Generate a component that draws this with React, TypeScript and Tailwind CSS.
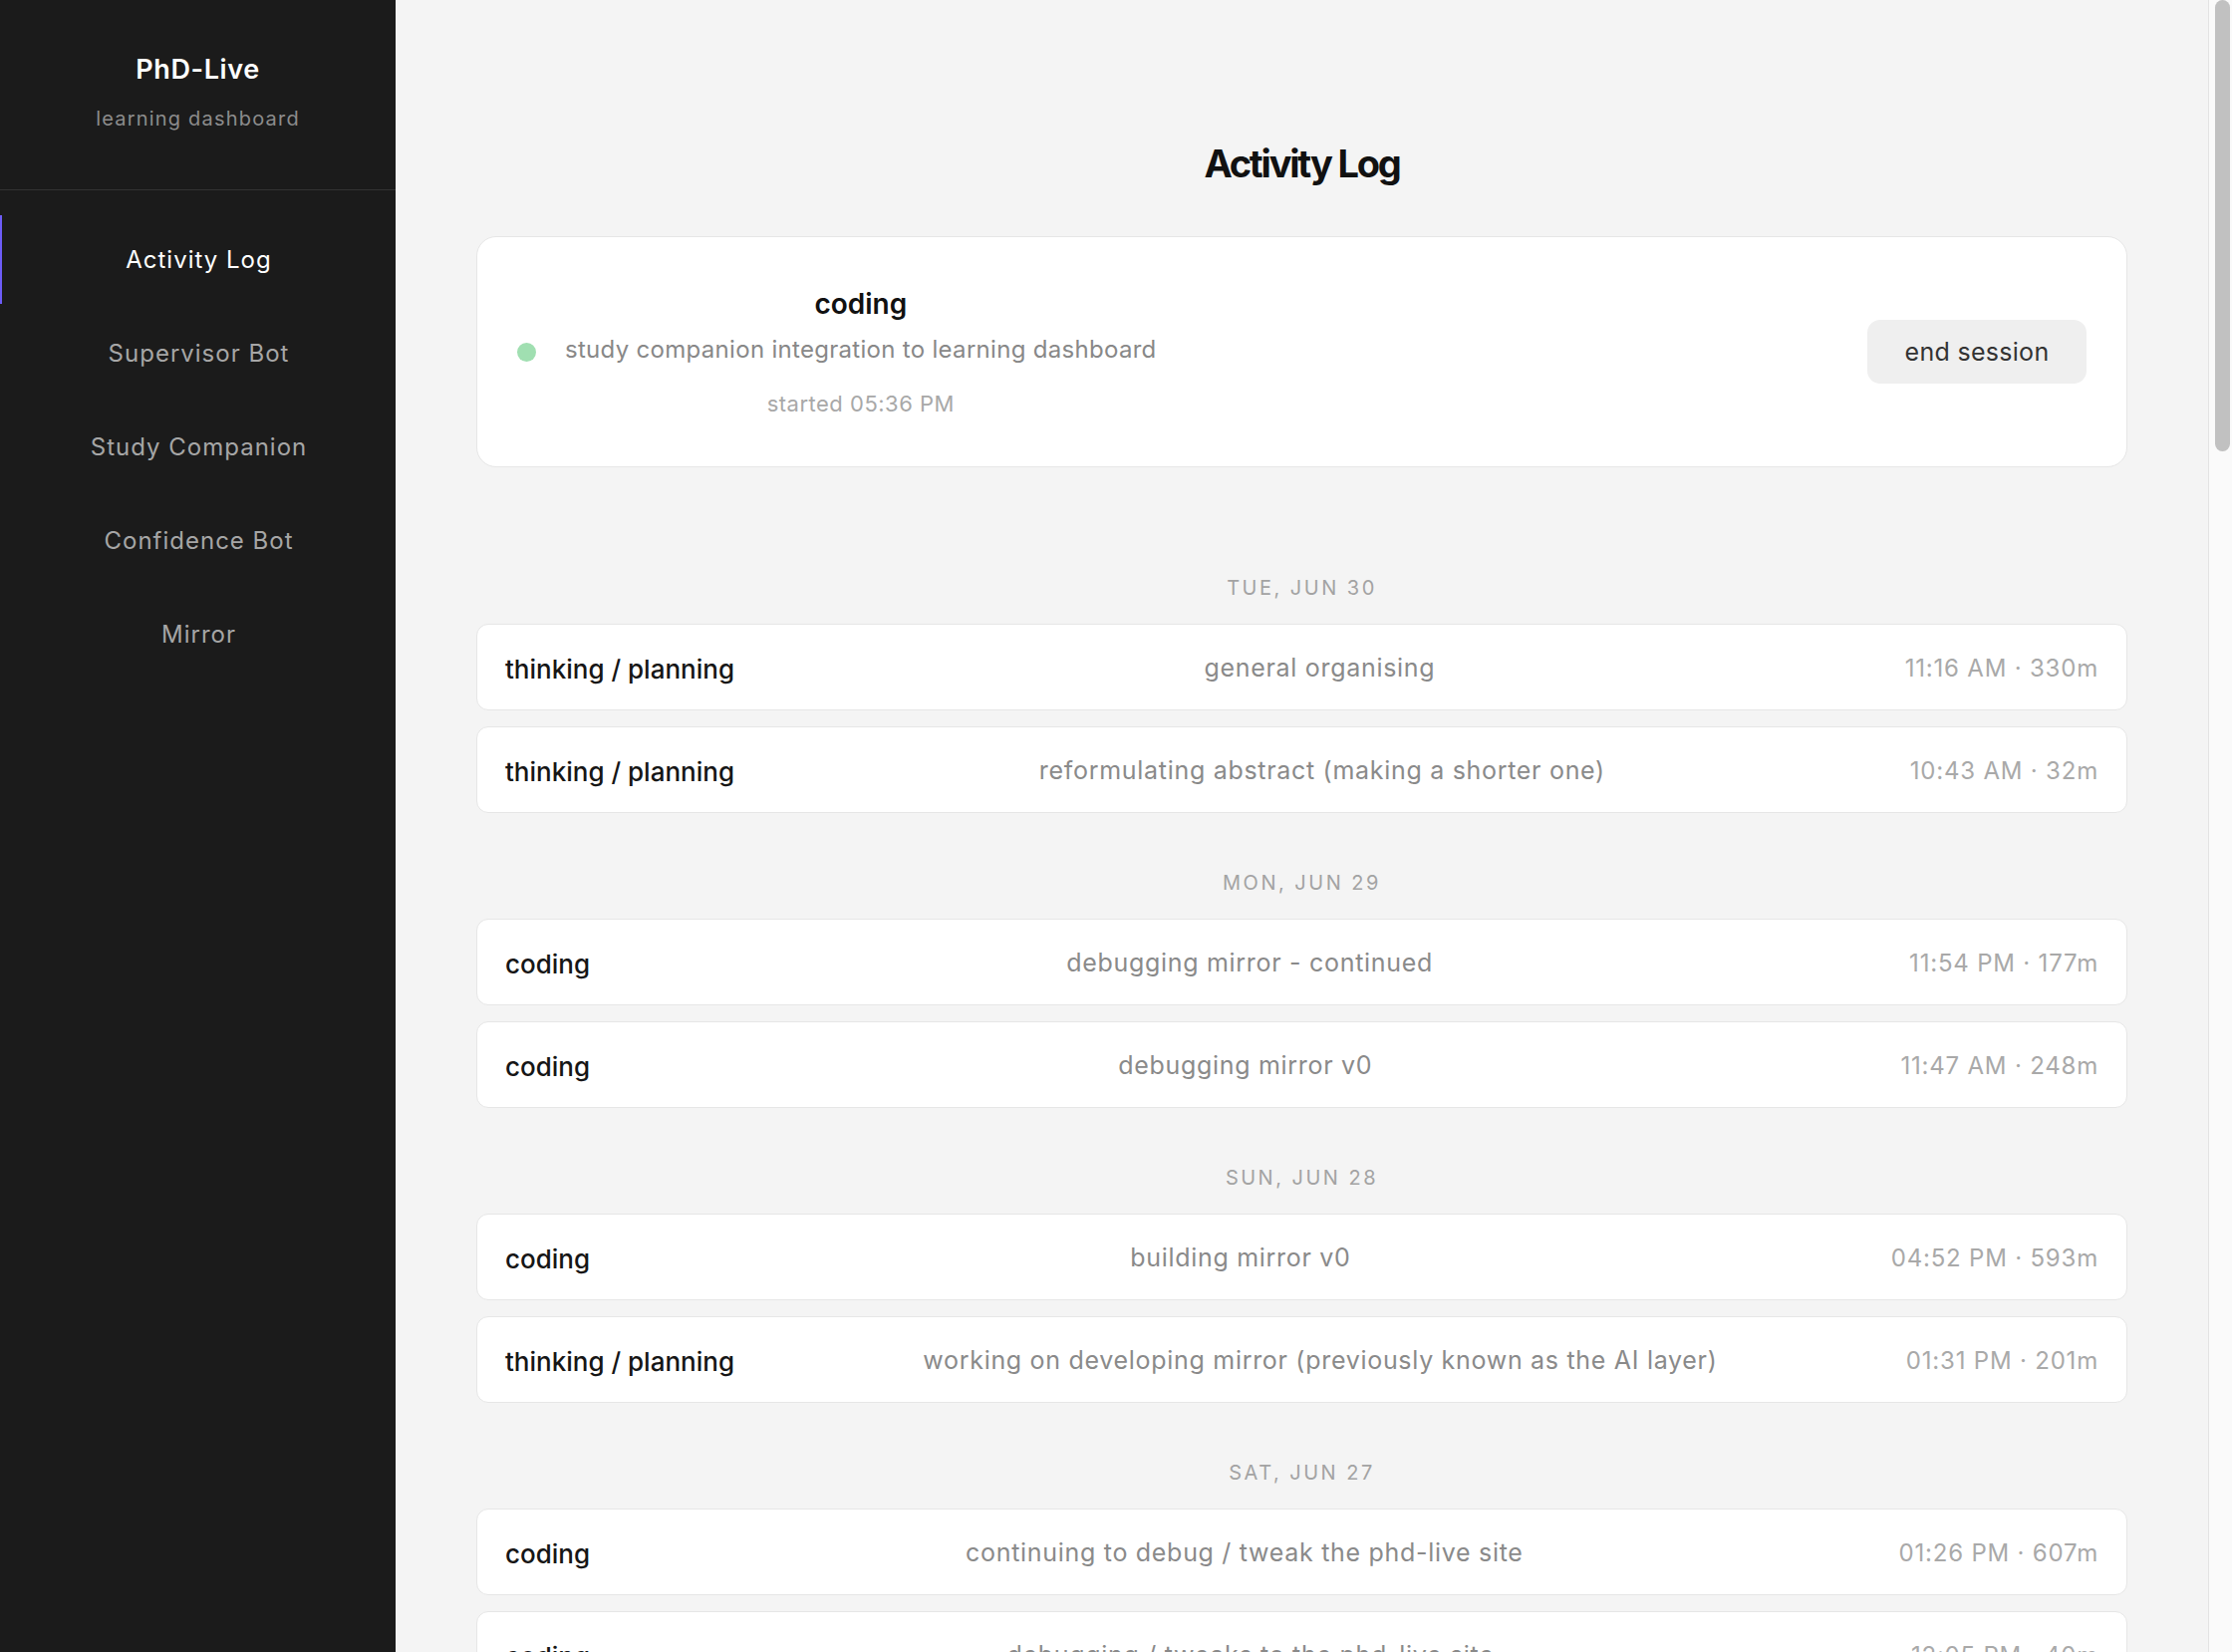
import React from "react";

type Entry = { kind: string; note: string; time: string };
type Day = { date: string; entries: Entry[] };

const NAV = ["Activity Log", "Supervisor Bot", "Study Companion", "Confidence Bot", "Mirror"];

const e = (kind: string, note: string, time: string): Entry => ({ kind, note, time });

const DAYS: Day[] = [
  { date: "Tue, Jun 30", entries: [
    e("thinking / planning", "general organising", "11:16 AM · 330m"),
    e("thinking / planning", "reformulating abstract (making a shorter one)", "10:43 AM · 32m"),
  ] },
  { date: "Mon, Jun 29", entries: [
    e("coding", "debugging mirror - continued", "11:54 PM · 177m"),
    e("coding", "debugging mirror v0", "11:47 AM · 248m"),
  ] },
  { date: "Sun, Jun 28", entries: [
    e("coding", "building mirror v0", "04:52 PM · 593m"),
    e("thinking / planning", "working on developing mirror (previously known as the AI layer)", "01:31 PM · 201m"),
  ] },
  { date: "Sat, Jun 27", entries: [
    e("coding", "continuing to debug / tweak the phd-live site", "01:26 PM · 607m"),
    e("coding", "debugging / tweaks to the phd-live site", "12:05 PM · 40m"),
  ] },
];

function Sidebar() {
  return (
    <aside className="w-[397px] shrink-0 h-full bg-[#1b1b1b] flex flex-col">
      <div className="pt-[54px] pb-[57px] border-b border-[#333333] flex flex-col items-center">
        <div className="text-[27px] leading-8 font-semibold text-white tracking-[0.6px]">PhD-Live</div>
        <div className="mt-[19px] text-[20px] leading-7 text-[#8c8c8c] tracking-[1.2px]">learning dashboard</div>
      </div>
      <nav className="pt-[25px] flex flex-col gap-[5px]">
        {NAV.map((label, i) => (
          <div
            key={label}
            className={`h-[89px] flex items-center justify-center border-l-2 text-[24px] tracking-[1px] ${
              i === 0 ? "border-[#6d5cf7] text-white" : "border-transparent text-[#a6a6a6]"
            }`}
          >
            {label}
          </div>
        ))}
      </nav>
    </aside>
  );
}

function ActiveSession() {
  return (
    <div className="h-[232px] rounded-[20px] border border-[#e6e6e6] bg-white px-[40px] flex items-center justify-between">
      <div className="flex items-center gap-[29px]">
        <span className="w-[19px] h-[19px] rounded-full bg-[#a0dfb1] shrink-0" />
        <div className="flex flex-col items-center">
          <div className="text-[28px] leading-9 font-semibold text-[#111111]">coding</div>
          <div className="mt-[12px] text-[24px] leading-8 text-[#888888] tracking-[0.3px]">
            study companion integration to learning dashboard
          </div>
          <div className="mt-[24px] text-[22px] leading-7 text-[#a8a8a8] tracking-[0.5px]">started 05:36 PM</div>
        </div>
      </div>
      <button className="w-[220px] h-[64px] pt-[2px] rounded-[13px] bg-[#efefef] text-[25px] text-[#333333] tracking-[0.3px]">
        end session
      </button>
    </div>
  );
}

function EntryRow({ entry }: { entry: Entry }) {
  return (
    <div className="h-[87px] pt-[3px] rounded-xl border border-[#e6e6e6] bg-white px-7 flex items-center justify-between">
      <span className="text-[26px] font-medium text-[#161616]">{entry.kind}</span>
      <span className="text-[25px] text-[#8a8a8a] tracking-[0.7px]">{entry.note}</span>
      <span className="text-[24px] text-[#a9a9a9] tracking-[0.8px]">{entry.time}</span>
    </div>
  );
}

export default function App() {
  return (
    <div className="flex h-screen w-full overflow-hidden font-['Inter','Noto_Sans',sans-serif]">
      <Sidebar />
      <main className="flex-1 h-full overflow-hidden bg-[#f4f4f4]">
        <div className="px-[81px] pt-[141px] pb-[80px]">
          <h1 className="text-center text-[38px] leading-[46px] font-bold tracking-[-2.2px] text-[#111111]">
            Activity Log
          </h1>
          <div className="mt-[50px]">
            <ActiveSession />
          </div>
          <div className="mt-[109px] flex flex-col gap-[58px]">
            {DAYS.map(day => (
              <section key={day.date}>
                <div className="text-center uppercase text-[20px] leading-6 tracking-[2.5px] text-[#a3a3a3] mb-6">
                  {day.date}
                </div>
                <div className="flex flex-col gap-4">
                  {day.entries.map((entry, i) => (
                    <EntryRow key={i} entry={entry} />
                  ))}
                </div>
              </section>
            ))}
          </div>
        </div>
      </main>
      {/* page scrollbar */}
      <div className="w-6 shrink-0 h-full bg-[#fafafa] border-l border-[#e3e3e3] pl-[6px]">
        <div className="w-[15px] h-[453px] rounded-full bg-[#c1c1c1]" />
      </div>
    </div>
  );
}
